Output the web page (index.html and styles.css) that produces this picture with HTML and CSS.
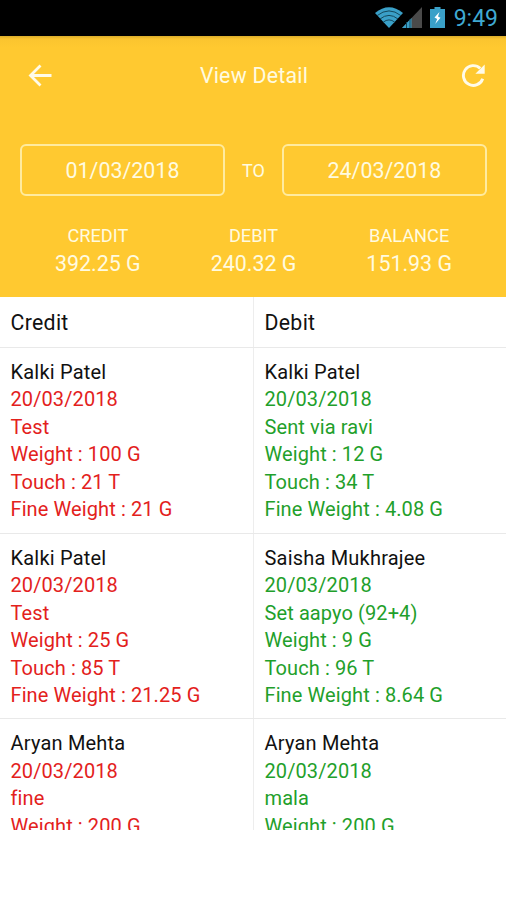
FILE: index.html
```html
<!DOCTYPE html>
<html>
<head>
<meta charset="utf-8" />
<title>View Detail</title>
<link rel="stylesheet" href="styles.css">
</head>
<body>

<div class="status">
	<svg class="wifi" width="28" height="21" viewBox="0 0 28 21">
		<path d="M0 6Q14 -5.5 28 6L14 21Z" fill="#3aa0c8"/>
		<path d="M2 8.7Q14 -.9 26 8.7M5 12Q14 4.8 23 12M8.2 15.2Q14 10.6 19.8 15.2" fill="none" stroke="#14485c" stroke-width="1"/>
	</svg>
	<svg class="signal" width="20" height="21" viewBox="0 0 20 21">
		<path d="M20 0V21H0Z" fill="#4a4a4a"/>
		<path d="M9.5 11V21H0Z" fill="#3aa0c8"/>
		<path d="M4.5 15V21M8 12V21" stroke="#14485c" stroke-width="1"/>
	</svg>
	<svg class="battery" width="15" height="21" viewBox="0 0 15 21">
		<path d="M4.5 0H10.5V2H15V21H0V2H4.5Z" fill="#3aa0c8"/>
		<path d="M9.5 5L4.5 10.5L7.2 12L5.2 17L10.5 10.8L8 9.5Z" fill="#fff"/>
	</svg>
	<span class="time">9:49</span>
</div>

<div class="top">
	<div class="bar">
		<svg class="back" width="24" height="24" viewBox="0 0 24 24">
			<path d="M23.5 11.5H3M12.5 1.5L2.5 11.5L12.5 21.5" fill="none" stroke="#fffbe8" stroke-width="2.8"/>
		</svg>
		<h1>View Detail</h1>
		<svg class="reload" width="24" height="24" viewBox="0 0 24 24">
			<path d="M21.7 14.7A9.9 9.9 0 1 1 19.2 4.4" fill="none" stroke="#fffbe8" stroke-width="2.9"/>
			<path d="M23.7 .5V9.8H14.4Z" fill="#fffbe8"/>
		</svg>
	</div>
	<div class="dates">
		<div class="date">01/03/2018</div>
		<span class="to">TO</span>
		<div class="date">24/03/2018</div>
	</div>
	<div class="totals">
		<div><p class="label">CREDIT</p><p class="num">392.25 G</p></div>
		<div><p class="label">DEBIT</p><p class="num">240.32 G</p></div>
		<div><p class="label">BALANCE</p><p class="num">151.93 G</p></div>
	</div>
</div>

<div class="list">
	<div class="row head">
		<div class="cell">Credit</div>
		<div class="cell">Debit</div>
	</div>
	<div class="row">
		<div class="cell credit">
			<h2>Kalki Patel</h2>
			<p>20/03/2018</p>
			<p>Test</p>
			<p>Weight : 100 G</p>
			<p>Touch : 21 T</p>
			<p>Fine Weight : 21 G</p>
		</div>
		<div class="cell debit">
			<h2>Kalki Patel</h2>
			<p>20/03/2018</p>
			<p>Sent via ravi</p>
			<p>Weight : 12 G</p>
			<p>Touch : 34 T</p>
			<p>Fine Weight : 4.08 G</p>
		</div>
	</div>
	<div class="row">
		<div class="cell credit">
			<h2>Kalki Patel</h2>
			<p>20/03/2018</p>
			<p>Test</p>
			<p>Weight : 25 G</p>
			<p>Touch : 85 T</p>
			<p>Fine Weight : 21.25 G</p>
		</div>
		<div class="cell debit">
			<h2>Saisha Mukhrajee</h2>
			<p>20/03/2018</p>
			<p>Set aapyo (92+4)</p>
			<p>Weight : 9 G</p>
			<p>Touch : 96 T</p>
			<p>Fine Weight : 8.64 G</p>
		</div>
	</div>
	<div class="row">
		<div class="cell credit">
			<h2>Aryan Mehta</h2>
			<p>20/03/2018</p>
			<p>fine</p>
			<p>Weight : 200 G</p>
		</div>
		<div class="cell debit">
			<h2>Aryan Mehta</h2>
			<p>20/03/2018</p>
			<p>mala</p>
			<p>Weight : 200 G</p>
		</div>
	</div>
</div>

</body>
</html>
```
FILE: styles.css
```css
*{margin:0;padding:0;box-sizing:border-box;}
body{background:#fff;font-family:Roboto,sans-serif;font-size:20px;color:#111;}
h1,h2{font-weight:400;}

.status{display:flex;justify-content:flex-end;height:36px;padding:7px 8px 0 0;background:#000;}
.wifi{margin-right:-1px;}
.battery{margin:0 9px 0 8px;}
.time{margin-top:-1px;font-size:23px;line-height:26px;color:#3fa9d2;}

.top{height:261px;background:linear-gradient(#d9ac2b,#fbc52f 3px,#ffc930 12px);color:#fffbe0;}
.bar{display:flex;justify-content:space-between;align-items:center;height:79px;padding:0 21px 0 28px;}
.bar h1{margin-right:5px;font-size:21.3px;letter-spacing:.25px;}
.dates{display:flex;justify-content:space-between;align-items:center;margin-top:29px;padding:0 19px 0 20px;}
.date{width:205px;height:52px;border:2px solid #ffeb9f;border-radius:6px;font-size:21.4px;line-height:49px;text-align:center;}
.to{font-size:18px;}
.totals{display:flex;padding:28px 19px 0 20px;text-align:center;}
.totals div{flex:1;}
.label{font-size:18.2px;line-height:24px;}
.num{font-size:21.4px;line-height:31px;}

.list{height:533px;overflow:hidden;}
.row{display:flex;border-bottom:1px solid #e9e9e9;}
.cell{width:253px;padding:11px 0 9px 10.5px;line-height:27.45px;letter-spacing:.1px;}
.cell + .cell{width:253px;border-left:1px solid #ededed;padding-left:10.5px;}
.cell h2{font-size:20px;letter-spacing:.2px;}
.head .cell{height:50px;padding-top:12px;font-size:21.3px;letter-spacing:.3px;}
.credit p{color:#e3211c;}
.debit p{color:#1fa02b;}
```
